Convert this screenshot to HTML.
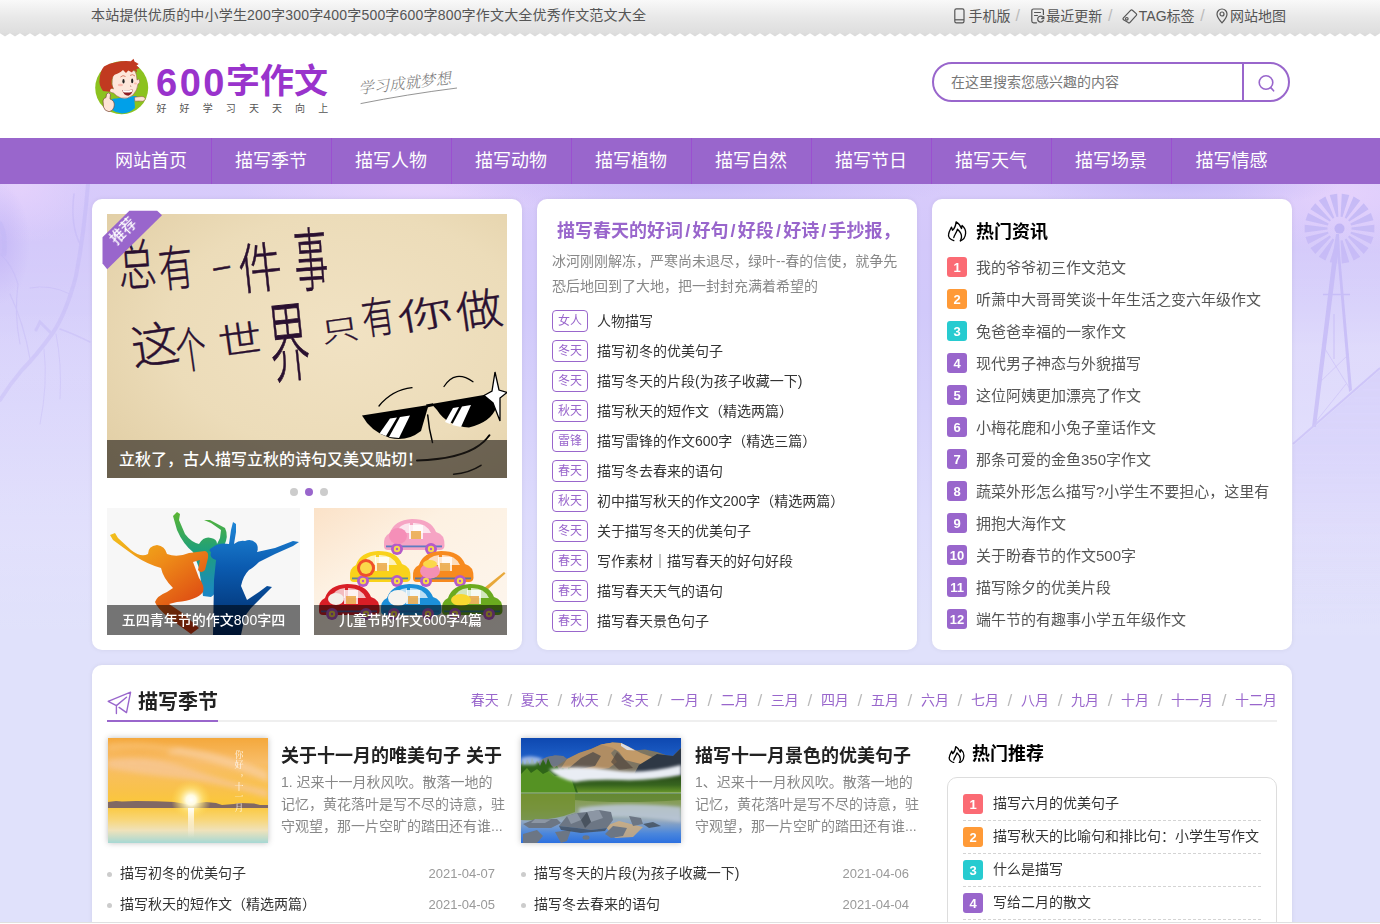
<!DOCTYPE html>
<html lang="zh-CN">
<head>
<meta charset="utf-8">
<title>600字作文</title>
<style>
*{margin:0;padding:0;box-sizing:border-box}
html,body{width:1380px;height:924px;overflow:hidden}
body{font-family:"Liberation Sans","Noto Sans CJK SC",sans-serif;font-size:14px;color:#333;background:#e0e1fb;position:relative}
a{color:inherit;text-decoration:none}
ul{list-style:none}
.abs{position:absolute}
/* top bar */
#top{position:absolute;left:0;top:0;width:1380px;height:33px;background:linear-gradient(#f9f9f9,#e9e9e9 50%,#dedede);}
#zig{position:absolute;left:0;top:33px;width:1380px;height:4px;display:block}
#top .l{position:absolute;left:91px;top:0;line-height:31px;font-size:14px;color:#555;letter-spacing:.19px}
#top .r span,#top .r i{position:absolute;top:0;line-height:32px;font-size:14px;color:#555;white-space:nowrap;font-style:normal}
#top .r i{color:#bbb;font-size:16px}
#top .r svg{position:absolute}
/* header */
#hd{position:absolute;left:0;top:33px;width:1380px;height:105px;background:#fff}

#logo{position:absolute;left:92px;top:55px;width:60px;height:62px}
#lgt{position:absolute;left:156px;top:59px;font-size:34px;line-height:44px;font-weight:700;color:#9933cc;white-space:nowrap}
#lgt span{font-size:38px;letter-spacing:2.5px;margin-right:-1px;vertical-align:-2.5px}
#lgs{position:absolute;left:156.5px;top:101.5px;font-size:10px;line-height:14px;color:#555;letter-spacing:13.1px;white-space:nowrap}
#slog{position:absolute;left:356px;top:70px;width:104px;height:40px}
#sbox{position:absolute;left:932px;top:62px;width:358px;height:40px;border:2px solid #9966cc;border-radius:20px;background:#fff}
#sbox span{position:absolute;left:17px;top:0;line-height:36px;font-size:14px;color:#777}
#sbox b{position:absolute;left:308px;top:0;width:2px;height:36px;background:#9966cc}
#sbox svg{position:absolute;left:320.5px;top:7.5px}
/* nav */
#nav{position:absolute;left:0;top:138px;width:1380px;height:46px;background:#9966cc}
#nav ul{position:absolute;left:92px;top:0;display:flex}
#nav li{width:120px;height:46px;line-height:47px;text-align:center;color:#fff;font-size:18px;border-right:1px solid #9b4fd0;padding-right:1px}
#nav li:last-child{border-right:none}
/* main bg */
#bg{position:absolute;left:0;top:184px;width:1380px;height:740px;background:linear-gradient(#cfc4fa 0,#d9d2fb 120px,#e2dffc 330px,#e3e1fb 100%)}
.card{position:absolute;background:#fff;border-radius:10px;box-shadow:0 0 5px rgba(0,0,20,.065)}

/* card1 */
#slide{position:absolute;left:107px;top:214px;width:400px;height:264px;overflow:hidden;background:#ecdcb8}
#slide svg{position:absolute;left:0;top:0}
#slide .cap{position:absolute;left:0;bottom:0;width:400px;height:38px;background:rgba(35,30,25,.63);color:#fff;font-size:16px;font-weight:500;line-height:40px;padding-left:12px;white-space:nowrap}
#rib{position:absolute;left:98px;top:206px;width:70px;height:70px}
.dots{position:absolute;top:488px;left:290px}
.dots i{position:absolute;top:0;width:8px;height:8px;border-radius:50%;background:#ccc}
.sm{position:absolute;top:508px;width:193px;height:127px;overflow:hidden}
.sm svg{position:absolute;left:0;top:0}
.sm .cap{position:absolute;left:0;bottom:0;width:193px;height:30px;background:rgba(0,0,0,.53);color:#fff;font-size:14px;font-weight:500;line-height:30px;text-align:center;white-space:nowrap}
/* card2 */
#c2t{position:absolute;left:557px;top:218px;font-size:18px;line-height:26px;font-weight:700;color:#9966cc;white-space:nowrap}
#c2t s{text-decoration:none;padding:0 2.2px}
#c2d{position:absolute;left:552px;top:249px;width:352px;font-size:14px;line-height:24.5px;color:#888}
#c2l{position:absolute;left:552px;top:306px}
#c2l li{height:30px;line-height:30px;font-size:14px;color:#333;white-space:nowrap;position:relative;padding-left:45px}
#c2l li em{position:absolute;left:0;top:4px;width:36px;height:22px;border:1px solid #9966cc;border-radius:4px;font-style:normal;font-size:12px;line-height:21.5px;text-align:center;color:#9966cc}
/* card3 */
.hot{position:absolute;font-size:18px;font-weight:700;color:#000;line-height:26px;white-space:nowrap}
.hot svg{position:absolute;left:-29px;top:2px}
#c3l{position:absolute;left:947px;top:251px}
#c3l li{height:32px;line-height:33px;font-size:15px;color:#555;white-space:nowrap;position:relative;padding-left:29px}
.rk li b{position:absolute;left:0;width:20px;height:20px;border-radius:3px;background:#9966cc;color:#fff;font-size:13px;font-weight:700;line-height:21px;text-align:center}
#c3l li b{top:6px}
.rk li:nth-child(1) b{background:#fb6b74}
.rk li:nth-child(2) b{background:#ff9a37}
.rk li:nth-child(3) b{background:#27cbd0}

/* card4 */
#s2t{position:absolute;left:138px;top:688px;font-size:20px;font-weight:700;color:#222;line-height:28px;white-space:nowrap}
#s2i{position:absolute;left:107px;top:690px}
#s2g{position:absolute;left:107px;top:720px;width:1170px;height:2px;background:#efefef}
#s2p{position:absolute;left:107px;top:720px;width:111px;height:2px;background:#9966cc}
#s2n{position:absolute;right:103px;top:687px;font-size:14px;line-height:26px;color:#9966cc;white-space:nowrap}
#s2n i{font-style:normal;color:#bbb;font-size:17px;margin:0 8.6px 0 8.7px;vertical-align:-1px;line-height:1}
.pic{position:absolute;top:738px;width:160px;height:105px;overflow:hidden;box-shadow:0 0 6px rgba(0,0,0,.25)}
.pic svg{position:absolute;left:0;top:0}
.at{position:absolute;top:742px;font-size:18px;font-weight:700;color:#222;line-height:28px;white-space:nowrap}
.ad{position:absolute;top:771px;width:240px;white-space:nowrap;font-size:14px;line-height:22.2px;color:#888}
.al{position:absolute;top:858px;width:388px}
.al li{position:relative;height:31px;line-height:31px;font-size:14px;color:#333;padding-left:13px;white-space:nowrap}
.al li:before{content:"";position:absolute;left:0;top:13.5px;width:5px;height:5px;border-radius:50%;background:#ccc}
.al li span{position:absolute;right:0;top:0;font-size:13px;color:#999}
#rbox{position:absolute;left:947px;top:777px;width:330px;height:200px;border:1px solid #ddd;border-radius:10px}
#c4l{position:absolute;left:963px;top:788px;width:298px}
#c4l li{height:33px;line-height:31px;font-size:14px;color:#333;white-space:nowrap;position:relative;padding-left:30px;border-bottom:1px dashed #d4d4d4}
#c4l li b{top:6px}
</style>
</head>
<body>
<div id="bg"><svg id="bgs" width="1380" height="740" viewBox="0 0 1380 740">
<defs>
<linearGradient id="bgl" x1="0" y1="0" x2="0" y2="1"><stop offset="0" stop-color="#d8cbfb"/><stop offset=".08" stop-color="#d3c8fa"/><stop offset=".17" stop-color="#d1c9fa"/><stop offset=".3" stop-color="#d6d1fb"/><stop offset=".45" stop-color="#dddbfc"/><stop offset=".6" stop-color="#e0e1fb"/><stop offset="1" stop-color="#e0e1fb"/></linearGradient>
<radialGradient id="bgp" cx=".5" cy=".5" r=".5"><stop offset="0" stop-color="#e6d2fc" stop-opacity=".9"/><stop offset="1" stop-color="#e6d2fc" stop-opacity="0"/></radialGradient>
<radialGradient id="bgq" cx=".5" cy=".5" r=".5"><stop offset="0" stop-color="#c4b6f6" stop-opacity=".8"/><stop offset="1" stop-color="#c4b6f6" stop-opacity="0"/></radialGradient>
<linearGradient id="sl" x1="0" y1="0" x2="0" y2="1"><stop offset="0" stop-color="#fff" stop-opacity="0"/><stop offset=".3" stop-color="#fff" stop-opacity=".28"/><stop offset=".75" stop-color="#fff" stop-opacity=".2"/><stop offset="1" stop-color="#fff" stop-opacity="0"/></linearGradient>
<linearGradient id="fade" x1="0" y1="0" x2="0" y2="1"><stop offset="0" stop-color="#fff"/><stop offset=".6" stop-color="#fff" stop-opacity=".7"/><stop offset="1" stop-color="#fff" stop-opacity="0"/></linearGradient>
<mask id="fm"><rect width="1380" height="440" fill="url(#fade)"/></mask>
<filter id="bb"><feGaussianBlur stdDeviation=".6"/></filter>
</defs>
<rect width="1380" height="740" fill="url(#bgl)"/>
<rect x="1292" y="40" width="88" height="420" fill="url(#sl)"/><rect x="0" y="40" width="92" height="420" fill="url(#sl)" opacity=".6"/>
<ellipse cx="1345" cy="10" rx="120" ry="60" fill="url(#bgp)"/>
<ellipse cx="420" cy="5" rx="180" ry="30" fill="url(#bgp)"/>
<ellipse cx="20" cy="0" rx="70" ry="60" fill="url(#bgp)"/>
<ellipse cx="700" cy="0" rx="260" ry="28" fill="url(#bgq)"/>
<ellipse cx="1180" cy="0" rx="160" ry="26" fill="url(#bgq)"/>
<ellipse cx="0" cy="60" rx="30" ry="60" fill="url(#bgq)"/>
<g mask="url(#fm)" filter="url(#bb)">
<g fill="none" stroke="#c4b9f6" stroke-linecap="round" opacity=".55">
<path d="M88 0Q84 50 76 92Q66 130 52 150Q36 172 22 186Q10 200 0 216" stroke-width="4"/>
<path d="M52 150L40 138L36 146" stroke-width="3"/>
<path d="M60 145Q74 150 90 158" stroke-width="1.5"/>
<path d="M80 60Q70 40 74 10" stroke-width="1.5"/>
<path d="M30 175Q24 140 10 110" stroke-width="1.2"/>
<path d="M20 160Q14 130 18 100Q12 80 0 70" stroke-width="1.2"/>
<path d="M44 165Q48 200 40 240" stroke-width="1"/>
<path d="M56 150Q62 180 60 215" stroke-width="1"/>
<path d="M0 40Q6 50 4 70" stroke-width="5"/>
<path d="M70 110Q50 100 30 104" stroke-width="1"/>
</g>
<path d="M1351.5 43.6L1374.3 40.8L1374.3 48.4L1351.5 45.6ZM1351.1 47.8L1373.5 52.9L1370.9 60.1L1350.4 49.6ZM1349.3 51.6L1368.6 64.0L1363.7 69.9L1348.0 53.0ZM1346.3 54.5L1360.2 72.8L1353.6 76.6L1344.7 55.4ZM1342.5 56.2L1349.3 78.2L1341.8 79.5L1340.6 56.5ZM1338.4 56.5L1337.2 79.5L1329.7 78.2L1336.5 56.2ZM1334.3 55.4L1325.4 76.6L1318.8 72.8L1332.7 54.5ZM1331.0 53.0L1315.3 69.9L1310.4 64.0L1329.7 51.6ZM1328.6 49.6L1308.1 60.1L1305.5 52.9L1327.9 47.8ZM1327.5 45.6L1304.7 48.4L1304.7 40.8L1327.5 43.6ZM1327.9 41.4L1305.5 36.3L1308.1 29.1L1328.6 39.6ZM1329.7 37.6L1310.4 25.2L1315.3 19.3L1331.0 36.2ZM1332.7 34.7L1318.8 16.4L1325.4 12.6L1334.3 33.8ZM1336.5 33.0L1329.7 11.0L1337.2 9.7L1338.4 32.7ZM1340.6 32.7L1341.8 9.7L1349.3 11.0L1342.5 33.0ZM1344.7 33.8L1353.6 12.6L1360.2 16.4L1346.3 34.7ZM1348.0 36.2L1363.7 19.3L1368.6 25.2L1349.3 37.6ZM1350.4 39.6L1370.9 29.1L1373.5 36.3L1351.1 41.4Z" fill="#c6baf6"/>
<circle cx="1339.5" cy="44.6" r="5" fill="#c0b3f4"/>
<path d="M1336 50L1333 70L1312 243L1316 243L1337.5 72L1349 208L1352 206L1340 70L1339 50Z" fill="#c5baf6"/>
<path d="M1323 110.5H1350" stroke="#c5baf6" stroke-width="1.5"/>
<path d="M1334 130V175" stroke="#c5baf6" stroke-width="1"/>
<path d="M1318 200L1349 170M1322 160L1350 205M1314 240L1346 200" stroke="#c5baf6" stroke-width=".7"/>
<path d="M1380 186L1293 262V440H1380Z" fill="#d0c8f9" opacity=".55"/>
<path d="M1380 184L1293 260" stroke="#c8bef7" stroke-width="2"/>
<g stroke="#d9d3fb" stroke-width="1" opacity=".8"><path d="M1345 222H1380M1336 230H1380M1327 238H1380M1318 246H1380M1354 214H1380M1363 206H1380M1308 254H1380M1300 262H1380M1296 270H1380M1296 278H1380M1296 286H1380M1296 294H1380M1296 302H1380M1296 310H1380"/></g>
</g>
</svg></div>
<div id="hd"></div>
<div id="top">
  <div class="l">本站提供优质的中小学生200字300字400字500字600字800字作文大全优秀作文范文大全</div>
  <div class="r">
<svg style="left:954px;top:8px" width="11" height="16" viewBox="0 0 11 16" fill="none" stroke="#555" stroke-width="1.2"><rect x=".8" y=".8" width="9.2" height="14" rx="1.6"/><path d="M1 11.8H10"/></svg><span style="left:968.5px">手机版</span><i style="left:1015.5px">/</i>
<svg style="left:1030.5px;top:8px" width="14" height="16" viewBox="0 0 14 16" fill="none" stroke="#555" stroke-width="1.2" stroke-linecap="round"><path d="M12.4 6.5V2.8Q12.4 1 10.6 1H2.6Q.8 1 .8 2.8V13Q.8 14.8 2.6 14.8H5.5"/><path d="M3.5 4.5H9.5M3.5 7.5H6.5"/><path d="M12.6 10.5A3 3 0 1 0 12.3 12.6M12.8 8.6V10.7H10.7"/></svg><span style="left:1046.3px">最近更新</span><i style="left:1108px">/</i>
<svg style="left:1121.5px;top:8px" width="16" height="16" viewBox="0 0 16 16" fill="none" stroke="#555" stroke-width="1.2" stroke-linejoin="round"><path d="M1.2 10.2L8.6 2.4Q9.4 1.6 10.4 2.3L14.2 5.6Q15 6.4 14.3 7.3L7.8 14.6Q7 15.3 6.2 14.6L1.5 11.8Q.7 11 1.2 10.2Z"/><circle cx="4.8" cy="10.8" r="1.3"/></svg><span style="left:1138.8px">TAG标签</span><i style="left:1200.3px">/</i>
<svg style="left:1216px;top:8px" width="12" height="16" viewBox="0 0 12 16" fill="none" stroke="#555" stroke-width="1.2"><path d="M6 14.8Q1 9.5 1 6A5 5 0 0 1 11 6Q11 9.5 6 14.8Z"/><circle cx="6" cy="6" r="2"/></svg><span style="left:1230px">网站地图</span>
</div>
</div>
<svg id="zig" width="1380" height="4" viewBox="0 0 1380 4"><defs><pattern id="zz" width="10" height="4" patternUnits="userSpaceOnUse"><path d="M0 0H10V0.3L5 3.6L0 0.3Z" fill="#dcdcdc"/></pattern></defs><rect width="1380" height="4" fill="url(#zz)"/></svg>
<svg id="logo" viewBox="0 0 60 62">
<circle cx="29.7" cy="32.8" r="26.5" fill="#8cc21f"/>
<path d="M18 47Q19 43 24 43.5L42 41Q46 40.5 46 45L42.5 46L43 53Q38 58 30 58.5Q24 58 20 55Z" fill="#00a0e9"/>
<path d="M42.5 42.2L50 41.5Q54 42 53 45Q51 47 47 46L42.8 46.2Z" fill="#fde3d6" stroke="#8a5040" stroke-width=".5"/>
<path d="M21 20Q19 30 21.5 34Q18 32 17 35Q18 38 21.5 38Q24 41 29 43Q36 44.5 41 40Q45.5 35 46 29Q48.5 28 47.5 25Q46.5 23.5 45 25Q45 20 43 16L30 13Z" fill="#fde6da" stroke="#8a5040" stroke-width=".5"/>
<path d="M11 36Q6.5 30 7.6 24.6Q8 16 12 11.5Q17 8 24 7.2Q31 5.5 38.9 6.3L41.5 3.7L42.5 6.5L46.7 8.9L44.5 10.5L47.6 13.3L44.5 14L45 17.6Q43 15 41.5 15L40 17.5L36.3 15.5L34 18L31 15Q28 18 25.8 18.5Q22 19 20.6 22Q19 26 19.7 29.8L21.5 33.3Q18 32.5 18 36.7Z" fill="#c13a20"/>
<path d="M30.2 35Q35.5 35.8 40.6 34.6Q40.5 39.5 36.3 40.7Q31.5 40.5 30.2 35Z" fill="#8e1c24"/>
<path d="M30.6 35.1Q35.5 35.8 40.3 34.7L39.8 37Q35.5 38 31.4 37.3Z" fill="#fff"/>
<ellipse cx="31.5" cy="26.3" rx="1.1" ry="2.3" fill="#222"/><ellipse cx="40.2" cy="25.9" rx="1.1" ry="2.3" fill="#222"/>
<path d="M28.5 22Q31 19.5 33.5 21.5M38 20.5Q40.5 18.5 43 21" stroke="#c8563c" stroke-width=".7" fill="none"/>
<ellipse cx="28.4" cy="30" rx="2.6" ry="1.2" fill="#f9b9ae"/><ellipse cx="43.5" cy="28.5" rx="1.5" ry="1" fill="#f9b9ae"/>
<path d="M38 30.5Q39.5 31 38.8 32" stroke="#8a5040" stroke-width=".5" fill="none"/>
<path d="M11 46Q11 43 14 42.5L14.5 39Q16.7 36.5 18.5 39.5L18 44Q22.5 45.5 22.3 50Q22 55.5 17 56.7Q12.5 56 11.5 52Z" fill="#fde3d6" stroke="#7a4a3a" stroke-width=".7"/>
</svg>
<div id="lgt"><span>600</span>字作文</div>
<div id="lgs">好好学习天天向上</div>
<svg id="slog" viewBox="0 0 104 40"><text x="0" y="0" font-size="15.5" fill="#7d7d7d" font-weight="300" font-family="'Liberation Serif','Noto Serif CJK SC',serif" transform="translate(3 24) rotate(-6.5) skewX(-14)">学习成就梦想</text><path d="M4.6 33.6Q50 24.500 101 18" stroke="#888" stroke-width=".9" fill="none"/></svg>
<div id="sbox"><span>在这里搜索您感兴趣的内容</span><b></b><svg width="24" height="24" viewBox="0 0 24 24" fill="none" stroke="#9966cc" stroke-width="1.6" stroke-linecap="round"><circle cx="11" cy="10.5" r="6.8"/><path d="M15.8 15.6L18.6 18.8"/></svg></div>
<div id="nav"><ul>
<li>网站首页</li><li>描写季节</li><li>描写人物</li><li>描写动物</li><li>描写植物</li><li>描写自然</li><li>描写节日</li><li>描写天气</li><li>描写场景</li><li>描写情感</li>
</ul></div>

<div class="card" id="c1" style="left:92px;top:199px;width:430px;height:451px"></div>
<div class="card" id="c2" style="left:537px;top:199px;width:380px;height:451px"></div>
<div class="card" id="c3" style="left:932px;top:199px;width:360px;height:451px"></div>
<div class="card" id="c4" style="left:92px;top:665px;width:1200px;height:300px"></div>

<!-- card1 -->
<div id="slide">
<svg width="400" height="264" viewBox="0 0 400 264">
<defs><radialGradient id="pg" cx="60%" cy="45%" r="75%"><stop offset="0" stop-color="#f1e2c3"/><stop offset=".6" stop-color="#ecdcb9"/><stop offset="1" stop-color="#e2cfa6"/></radialGradient></defs>
<rect width="400" height="264" fill="url(#pg)"/>
<g fill="#2a1030" stroke="#2a1030" stroke-width=".45" font-family="'Liberation Sans','Noto Sans CJK SC',sans-serif" font-weight="300">
<text transform="translate(30 51) rotate(-4) scale(0.86 1.24)" text-anchor="middle" y="16" font-size="44">总</text>
<text transform="translate(69 54) rotate(-6) scale(0.79 1.11)" text-anchor="middle" y="16" font-size="44">有</text>
<text transform="translate(114.5 54.0) rotate(-10) scale(1 1)" text-anchor="middle" y="8" font-size="30">–</text>
<text transform="translate(153 54) rotate(-6) scale(0.99 1.24)" text-anchor="middle" y="16" font-size="44">件</text>
<text transform="translate(204 46) rotate(-4) scale(0.77 1.58)" text-anchor="middle" y="16" font-size="44">事</text>
<text transform="translate(48 131) rotate(-8) scale(1.09 1.09)" text-anchor="middle" y="16" font-size="44">这</text>
<text transform="translate(84 136) rotate(-8) scale(0.69 1.11)" text-anchor="middle" y="16" font-size="44">个</text>
<text transform="translate(133 126) rotate(-8) scale(0.99 0.84)" text-anchor="middle" y="16" font-size="44">世</text>
<text transform="translate(182 129) rotate(-6) scale(0.91 1.98)" text-anchor="middle" y="16" font-size="44">界</text>
<text transform="translate(233 116) rotate(-8) scale(0.84 0.64)" text-anchor="middle" y="16" font-size="44">只</text>
<text transform="translate(271 103) rotate(-8) scale(0.74 0.99)" text-anchor="middle" y="16" font-size="44">有</text>
<text transform="translate(318 100) rotate(-10) scale(1.24 0.82)" text-anchor="middle" y="16" font-size="44">你</text>
<text transform="translate(372 96) rotate(-8) scale(1.06 0.99)" text-anchor="middle" y="16" font-size="44">做</text>
</g>
<g fill="#000" stroke="none">
<path d="M255 201.5L320 191.2L321 193L314 217Q300 228 283 224Q264 218 255 201.5Z"/>
<path d="M324.5 190L385.5 179.5L389 194Q384 208 362 213.5Q340 212 330 196Z"/>
<path d="M319 190.5L326 189.2L326.5 192L320 193.5Z"/>
</g>
<g fill="#fff"><path d="M283 204.5L290 203.4L279 222L272.5 219.5Z"/><path d="M293 203L303 201.5L292 224L282 223Z"/>
<path d="M346 194L352 193L343 210L338 208Z"/><path d="M355 192.5L364 191L354 213L345 211Z"/></g>
<path d="M388 158L392 176L400 178.5L393 184L393 207L386 189L377 181.5L385 177Z" fill="#fff" stroke="#000" stroke-width="1.3"/>
<g fill="none" stroke="#000" stroke-linecap="round">
<path d="M272 192Q285 176 305 173.7" stroke-width="1.3"/>
<path d="M337 172.5Q348 155 366 167.7" stroke-width="1.3"/>
<path d="M320.7 201Q322 216 325.5 228.5" stroke-width="1.5"/>
<path d="M382.4 221.2Q366 245 310 246.4" stroke-width="2"/>
<path d="M374 251.3Q362 259 346.6 260.2" stroke-width="1.6"/>
</g>
</svg>
<div class="cap">立秋了，古人描写立秋的诗句又美又贴切！</div>
</div>
<svg id="rib" viewBox="0 0 70 70"><path d="M31.4 4.7H59.2L64 9.3L9.2 63.2L4.5 57.4V31.3Z" fill="#9966cc"/><text transform="translate(25 25) rotate(-45)" text-anchor="middle" y="5" font-size="15" font-weight="500" fill="#fff" font-family="'Liberation Sans','Noto Sans CJK SC',sans-serif">推荐</text></svg>
<div class="dots"><i style="left:0"></i><i style="left:15px;background:#9966cc"></i><i style="left:30px"></i></div>
<div class="sm" id="sm1" style="left:107px"><svg width="193" height="127" viewBox="0 0 193 127">
<defs>
<linearGradient id="go" x1="0" y1="0" x2=".7" y2="1"><stop offset="0" stop-color="#f2c11c"/><stop offset=".45" stop-color="#ee8a18"/><stop offset="1" stop-color="#d93a12"/></linearGradient>
<linearGradient id="gg" x1="0" y1="0" x2="0" y2="1"><stop offset="0" stop-color="#5cb531"/><stop offset=".45" stop-color="#1ea07a"/><stop offset="1" stop-color="#1b86c8"/></linearGradient>
<linearGradient id="gb" x1="0" y1="0" x2="0" y2="1"><stop offset="0" stop-color="#1f86d6"/><stop offset=".4" stop-color="#0b5bb0"/><stop offset="1" stop-color="#002a66"/></linearGradient>
</defs>
<rect width="193" height="127" fill="#f7f7f7"/>
<path fill="url(#gg)" d="M66 8L70 4L73 6L72 12L78 26Q84 34 92 36Q97 28 104 30Q110 31 110 36L113 30L114 22L104 15L97 12L103 12L118 20Q122 28 117 38L112 46L112 70Q110 86 104 89L96 88L92 60L86 44Q76 36 70 22Z"/>
<path fill="url(#go)" d="M3 27L8 25L11 30L24 42Q34 50 41 46Q41 38 50 37Q58 38 60 46Q70 50 82 45L98 43Q102 44 101 50L98 62Q94 66 91 62L93 52L86 54L92 70Q98 78 96 84Q90 92 70 94L62 96L74 104L92 120L84 126L62 110Q50 100 48 94Q50 88 60 84L66 80Q56 70 54 60Q40 56 28 48Q14 38 6 32Z"/>
<path fill="url(#gb)" d="M124 22L126 14L129 16L129 24L127 36Q132 32 138 33Q144 30 149 35Q152 39 150 44L168 40L186 33L192 34L186 38L168 46L152 54Q146 60 142 62Q136 68 134 78L140 92L152 84L160 78L165 79L156 88L144 100L138 108L134 127H106L107 72L109 52Q102 50 104 44Q100 42 106 39Q112 34 122 36Z"/>
</svg><div class="cap">五四青年节的作文800字四</div></div>
<div class="sm" id="sm2" style="left:314px"><svg width="193" height="127" viewBox="0 0 193 127">
<defs><linearGradient id="cb" x1="0" y1="0" x2="1" y2="1"><stop offset="0" stop-color="#fbe2c8"/><stop offset=".35" stop-color="#fdf1e2"/><stop offset="1" stop-color="#fdf6ee"/></linearGradient><symbol id="car" viewBox="0 0 62 36" overflow="visible"><path d="M1 27Q0 17 7 14Q11 1 29 0Q48 0 53 13Q62 15 61.5 27Q61 31 57 31H5Q1 31 1 27Z"/><path d="M13 14Q16 5 27 4V14ZM30 4Q43 3.5 48 14H30Z" fill="#fff" opacity=".7"/><rect x="26" y="6" width="14" height="14" fill="#fff" opacity=".8"/><rect x="28" y="12" width="10" height="8" fill="#e8a23c" opacity=".8"/><rect x="3" y="26.5" width="56" height="1.8" fill="#2a6fc0" opacity=".75"/><circle cx="14" cy="30" r="6" fill="#b45ac8"/><circle cx="14" cy="30" r="3.2" fill="#f6d84a"/><circle cx="14" cy="30" r="1.2" fill="#b45ac8"/><circle cx="48" cy="30" r="6" fill="#b45ac8"/><circle cx="48" cy="30" r="3.2" fill="#f6d84a"/><circle cx="48" cy="30" r="1.2" fill="#b45ac8"/></symbol></defs>
<rect width="193" height="127" fill="url(#cb)"/>
<path d="M170 80L190 64L191.5 65.5L173 82Z" fill="#e8a83a"/>
<use href="#car" x="69" y="11" width="62" height="36" fill="#f6a4c4"/>
<use href="#car" x="35" y="43" width="62" height="36" fill="#f9d21a"/>
<use href="#car" x="98" y="43" width="62" height="36" fill="#f78a1e"/>
<use href="#car" x="4" y="76" width="62" height="36" fill="#d81e26"/>
<use href="#car" x="66" y="76" width="62" height="36" fill="#1c8fd8"/>
<use href="#car" x="127" y="76" width="62" height="36" fill="#6aaa1e"/>
<ellipse cx="84" cy="28" rx="9" ry="8" fill="#f58fb8"/>
<circle cx="52" cy="60" r="9" fill="#f0502a"/><circle cx="52" cy="60" r="6" fill="#fbd84a"/>
<ellipse cx="116" cy="63" rx="10" ry="7.5" fill="#f490b4"/><ellipse cx="116" cy="56" rx="7" ry="4" fill="#fbd84a"/>
<ellipse cx="22" cy="91" rx="8" ry="6" fill="#f4f0ea"/>
<ellipse cx="84" cy="90" rx="10" ry="8" fill="#f6f3ee"/>
<ellipse cx="147" cy="92" rx="10" ry="6" fill="#f8d830"/>
</svg><div class="cap">儿童节的作文600字4篇</div></div>

<!-- card2 -->
<div id="c2t">描写春天的好词<s>/</s>好句<s>/</s>好段<s>/</s>好诗<s>/</s>手抄报，</div>
<div id="c2d">冰河刚刚解冻，严寒尚未退尽，绿叶--春的信使，就争先恐后地回到了大地，把一封封充满着希望的</div>
<ul id="c2l">
<li><em>女人</em>人物描写</li>
<li><em>冬天</em>描写初冬的优美句子</li>
<li><em>冬天</em>描写冬天的片段(为孩子收藏一下)</li>
<li><em>秋天</em>描写秋天的短作文（精选两篇）</li>
<li><em>雷锋</em>描写雷锋的作文600字（精选三篇）</li>
<li><em>春天</em>描写冬去春来的语句</li>
<li><em>秋天</em>初中描写秋天的作文200字（精选两篇）</li>
<li><em>冬天</em>关于描写冬天的优美句子</li>
<li><em>春天</em>写作素材｜描写春天的好句好段</li>
<li><em>春天</em>描写春天天气的语句</li>
<li><em>春天</em>描写春天景色句子</li>
</ul>

<!-- card3 -->
<div class="hot" style="left:976px;top:219px"><svg style="top:1px" width="20" height="22" viewBox="0 0 20 22" fill="none" stroke="#000" stroke-width="1.35" stroke-linecap="round" stroke-linejoin="round"><path d="M6.8 20.6C3 19.5 .8 17 1.6 14.4C2 11 3.6 9.5 4.4 7.1L5.5 10.2C7.5 8.5 8.8 5.5 9.1 1.9C11.5 3.2 13.3 5.5 14.5 8.5L15.1 5.4C17.5 7.5 19 10.5 18.6 13.5C18.2 17.5 16 20 13.4 20.8"/><path d="M6.8 17.5C7.2 15 9.5 13 10.5 9.2C13 11.5 14.8 14.5 14.5 17.1C14.3 19 13.8 20 13.4 20.8"/></svg>热门资讯</div>
<ul id="c3l" class="rk">
<li><b>1</b>我的爷爷初三作文范文</li>
<li><b>2</b>听萧中大哥哥笑谈十年生活之变六年级作文</li>
<li><b>3</b>兔爸爸幸福的一家作文</li>
<li><b>4</b>现代男子神态与外貌描写</li>
<li><b>5</b>这位阿姨更加漂亮了作文</li>
<li><b>6</b>小梅花鹿和小兔子童话作文</li>
<li><b>7</b>那条可爱的金鱼350字作文</li>
<li><b>8</b>蔬菜外形怎么描写?小学生不要担心，这里有</li>
<li><b>9</b>拥抱大海作文</li>
<li><b>10</b>关于盼春节的作文500字</li>
<li><b>11</b>描写除夕的优美片段</li>
<li><b>12</b>端午节的有趣事小学五年级作文</li>
</ul>

<!-- card4 -->
<svg id="s2i" width="26" height="25" viewBox="0 0 26 25" fill="none" stroke="#9966cc" stroke-width="1.4" stroke-linejoin="round" stroke-linecap="round"><path d="M1.2 11.3L23.6 2.2L19.5 22.6L12.1 17.4M1.2 11.3L9.4 15.6L19.5 7.2M9.4 15.6V23.6"/></svg>
<div id="s2t">描写季节</div>
<div id="s2g"></div><div id="s2p"></div>
<div id="s2n">春天<i>/</i>夏天<i>/</i>秋天<i>/</i>冬天<i>/</i>一月<i>/</i>二月<i>/</i>三月<i>/</i>四月<i>/</i>五月<i>/</i>六月<i>/</i>七月<i>/</i>八月<i>/</i>九月<i>/</i>十月<i>/</i>十一月<i>/</i>十二月</div>

<div class="pic" id="p1" style="left:108px"><svg width="160" height="105" viewBox="0 0 160 105">
<defs>
<linearGradient id="sky" x1="0" y1="0" x2="0" y2="1"><stop offset="0" stop-color="#f4a83c"/><stop offset=".35" stop-color="#f8bd68"/><stop offset=".75" stop-color="#f9c24a"/><stop offset="1" stop-color="#fbc935"/></linearGradient>
<linearGradient id="sea" x1="0" y1="0" x2="0" y2="1"><stop offset="0" stop-color="#fbc940"/><stop offset=".35" stop-color="#f8d678"/><stop offset=".65" stop-color="#efe2ba"/><stop offset="1" stop-color="#a6d8d4"/></linearGradient>
<radialGradient id="sun" cx=".5" cy=".5" r=".5"><stop offset="0" stop-color="#fff"/><stop offset=".25" stop-color="#fffbe0"/><stop offset=".6" stop-color="#ffe680" stop-opacity=".6"/><stop offset="1" stop-color="#ffd850" stop-opacity="0"/></radialGradient>
<linearGradient id="refl" x1="0" y1="0" x2="0" y2="1"><stop offset="0" stop-color="#fff" stop-opacity=".95"/><stop offset="1" stop-color="#fff" stop-opacity="0"/></linearGradient>
<filter id="bl"><feGaussianBlur stdDeviation="2.5"/></filter>
</defs>
<rect width="160" height="70" fill="url(#sky)"/>
<g filter="url(#bl)" opacity=".75"><path d="M0 22Q40 16 80 30T160 52V60Q110 44 70 40T0 30Z" fill="#f7c796"/><path d="M60 8Q110 12 160 34V44Q110 22 60 16Z" fill="#f9cf9e"/><path d="M0 6Q30 2 70 10L60 14Q30 8 0 14Z" fill="#f9c070"/></g>
<rect y="69" width="160" height="36" fill="url(#sea)"/>
<path d="M0 64L8 63L14 63.5L28 63L48 63.3L66 64L78 66L90 65L98 64L108 65L114 67L126 66L132 65L146 65.5L152 67L160 67V70H0Z" fill="#755f68" opacity=".92"/>
<circle cx="83" cy="62" r="20" fill="url(#sun)"/>
<rect x="80" y="70" width="6" height="30" fill="url(#refl)"/>
<g font-size="9" fill="#fff" opacity=".85" text-anchor="middle" font-family="'Liberation Serif','Noto Serif CJK SC',serif"><text x="131" y="20">你</text><text x="131" y="30">好</text><text x="137" y="37">，</text><text x="131" y="52">十</text><text x="131" y="62">一</text><text x="131" y="73">月</text></g>
</svg></div>
<div class="at" style="left:281px">关于十一月的唯美句子 关于</div>
<div class="ad" style="left:281px">1. 迟来十一月秋风吹。散落一地的<br>记忆，黄花落叶是写不尽的诗意，驻<br>守观望，那一片空旷的踏田还有谁...</div>
<ul class="al" style="left:107px">
<li>描写初冬的优美句子<span>2021-04-07</span></li>
<li>描写秋天的短作文（精选两篇）<span>2021-04-05</span></li>
</ul>

<div class="pic" id="p2" style="left:521px"><svg width="160" height="105" viewBox="0 0 160 105">
<defs>
<linearGradient id="sk2" x1="0" y1="0" x2="0" y2="1"><stop offset="0" stop-color="#0e48b0"/><stop offset=".5" stop-color="#2468d0"/><stop offset="1" stop-color="#5a94e0"/></linearGradient>
<linearGradient id="lk" x1="0" y1="0" x2="0" y2="1"><stop offset="0" stop-color="#7f9a3e"/><stop offset=".3" stop-color="#8c9f6e"/><stop offset=".55" stop-color="#93a8c0"/><stop offset=".8" stop-color="#4a86dc"/><stop offset="1" stop-color="#2a6fe0"/></linearGradient>
<linearGradient id="ff" x1="0" y1="0" x2="0" y2="1"><stop offset="0" stop-color="#27481a"/><stop offset=".55" stop-color="#37641e"/><stop offset="1" stop-color="#6a9a2a"/></linearGradient>
<filter id="b2"><feGaussianBlur stdDeviation="1.6"/></filter>
<filter id="b3"><feGaussianBlur stdDeviation=".5"/></filter>
</defs>
<rect width="160" height="56" fill="url(#sk2)"/>
<g filter="url(#b3)">
<path d="M12 26L26 19L34 17.5L42 18L46 21L58 15L70 11L80 6.5L92 4.5L100 5L108 9L114 12.5L124 11.5L136 14L146 17.5L152 18L160 10V42H12Z" fill="#7d7462"/>
<path d="M46 21L58 15L70 11L80 6.5L92 4.5L96 9L90 15L96 24L88 30L70 33L52 31L40 30Z" fill="#b08d64"/>
<path d="M80 6.5L92 4.5L100 5L108 9L120 15L134 20L120 26L104 22L98 14L92 10Z" fill="#c29a68"/>
<path d="M100 5L108 9L114 12.5L106 12L100 8Z" fill="#dcdde2"/>
<path d="M60 20L72 14L80 18L74 28L60 31L48 30Z" fill="#4c4a48" opacity=".75"/>
<path d="M96 14L104 22L112 30L98 32L90 24Z" fill="#54483e" opacity=".7"/>
<path d="M118 27L136 16L152 18L160 10V42H110Z" fill="#2e3944"/>
<path d="M12 26L26 19L34 17.5L42 18L46 21L36 28L20 30Z" fill="#6e7684"/>
</g>
<rect x="52" y="37" width="108" height="18" fill="url(#ff)"/>
<path d="M0 27L2 22L4 27L6 21L9 26L11 20L14 26L16 22L19 28L22 21L25 27L27 20L30 27L33 30L36 28L39 33L42 30L45 34L48 29L51 37L54 46L57 55H0Z" fill="#2f6518"/>
<path d="M0 36L6 30L10 35L16 31L22 36L28 33L34 38L42 37L50 40L55 55H0Z" fill="#5c9a26" opacity=".85"/>
<g filter="url(#b2)"><path d="M28 31Q60 27 90 32T160 27V37Q130 43 100 42T54 44Q36 40 28 31Z" fill="#e9edf4"/><path d="M0 20Q10 16 22 21L14 27L0 27Z" fill="#b9c9ea" opacity=".8"/></g>
<rect y="54.5" width="160" height="1" fill="#cfd6c0" opacity=".7"/>
<rect y="55.5" width="160" height="50" fill="url(#lk)"/>
<path d="M0 55.5H54V74Q30 84 0 82Z" fill="#708f2c" opacity=".75"/>
<path d="M54 55.5H160V62Q100 66 54 62Z" fill="#4f7a24" opacity=".55"/>
<g filter="url(#b2)"><path d="M58 70Q100 63 160 69V84Q110 77 58 80Z" fill="#bcc8d8" opacity=".85"/></g>
<path d="M84 88L98 83L122 89L112 99L94 100Z" fill="#d4ae78" opacity=".8"/>
<g filter="url(#b3)">
<g fill="#6c7684"><path d="M2 86L14 81L36 81L40 85L30 90L8 90Z"/><path d="M38 88L46 78L56 75L66 74L78 72L90 74L92 82L86 90L70 92L56 90Z"/><path d="M84 96L92 88L106 90L102 98L90 100Z"/><path d="M108 78L120 80L122 86L112 88Z"/><path d="M2 96L16 92L22 98L16 105H2Z"/><path d="M34 94L50 92L46 103L40 105Z"/><ellipse cx="65" cy="99.5" rx="3.5" ry="2.2"/></g>
<g fill="#949eac" opacity=".8"><path d="M46 78L56 75L60 82L50 86Z"/><path d="M66 74L78 72L82 80L70 84Z"/><path d="M14 81L30 81.5L24 85L10 85Z"/></g>
<g fill="#3e4852" opacity=".75"><path d="M38 88L56 90L70 92L86 90L84 93L60 95L40 92Z"/><path d="M122 86L132 84L140 88L128 90Z"/><path d="M60 82L66 74L70 84L64 90Z"/></g>
</g>
</svg></div>
<div class="at" style="left:695px">描写十一月景色的优美句子</div>
<div class="ad" style="left:695px">1、迟来十一月秋风吹。散落一地的<br>记忆，黄花落叶是写不尽的诗意，驻<br>守观望，那一片空旷的踏田还有谁...</div>
<ul class="al" style="left:521px">
<li>描写冬天的片段(为孩子收藏一下)<span>2021-04-06</span></li>
<li>描写冬去春来的语句<span>2021-04-04</span></li>
</ul>

<div class="hot" style="left:972px;top:741px"><svg style="left:-24.5px;top:3.5px" width="17" height="18.7" viewBox="0 0 20 22" fill="none" stroke="#000" stroke-width="1.5" stroke-linecap="round" stroke-linejoin="round"><path d="M6.8 20.6C3 19.5 .8 17 1.6 14.4C2 11 3.6 9.5 4.4 7.1L5.5 10.2C7.5 8.5 8.8 5.5 9.1 1.9C11.5 3.2 13.3 5.5 14.5 8.5L15.1 5.4C17.5 7.5 19 10.5 18.6 13.5C18.2 17.5 16 20 13.4 20.8"/><path d="M6.8 17.5C7.2 15 9.5 13 10.5 9.2C13 11.5 14.8 14.5 14.5 17.1C14.3 19 13.8 20 13.4 20.8"/></svg>热门推荐</div>
<div id="rbox"></div>
<ul id="c4l" class="rk">
<li><b>1</b>描写六月的优美句子</li>
<li><b>2</b>描写秋天的比喻句和排比句：小学生写作文</li>
<li><b>3</b>什么是描写</li>
<li><b>4</b>写给二月的散文</li>
<li><b>5</b>描写</li>
</ul>
<div style="position:absolute;left:0;top:922px;width:1380px;height:1px;background:#e0e0e0"></div><div style="position:absolute;left:0;top:923px;width:1380px;height:1px;background:#fff"></div>
</body>
</html>
